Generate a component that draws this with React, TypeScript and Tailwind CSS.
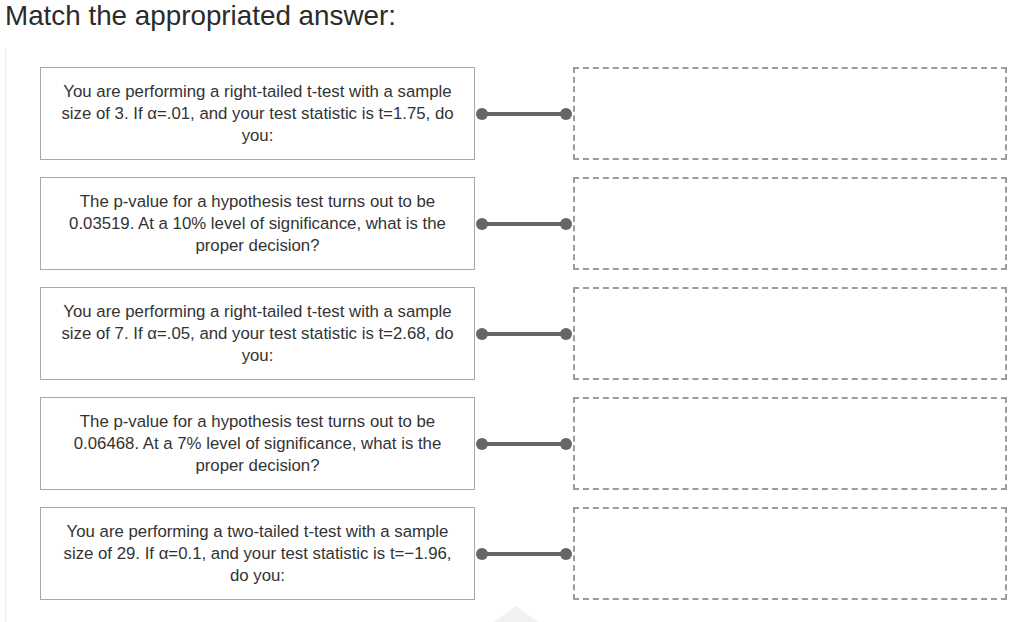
import React from "react";

const items = [
  "You are performing a right-tailed t-test with a sample size of 3. If α=.01, and your test statistic is t=1.75, do you:",
  "The p-value for a hypothesis test turns out to be 0.03519. At a 10% level of significance, what is the proper decision?",
  "You are performing a right-tailed t-test with a sample size of 7. If α=.05, and your test statistic is t=2.68, do you:",
  "The p-value for a hypothesis test turns out to be 0.06468. At a 7% level of significance, what is the proper decision?",
  "You are performing a two-tailed t-test with a sample size of 29. If α=0.1, and your test statistic is t=−1.96, do you:",
];

function Connector() {
  return (
    <svg width="98" height="14" viewBox="0 0 98 14" className="shrink-0">
      <line x1="7" y1="7" x2="91" y2="7" stroke="#666666" strokeWidth="4" />
      <circle cx="7" cy="7" r="6" fill="#666666" />
      <circle cx="91" cy="7" r="6" fill="#666666" />
    </svg>
  );
}

export default function App() {
  return (
    <div
      className="relative w-[1028px] h-[622px] overflow-hidden bg-white text-[#333333]"
      style={{ fontFamily: '"Liberation Sans", Arial, sans-serif' }}
    >
      <h1 className="pl-[5px] text-[27.8px] leading-[31px] text-[#2b2b2b] font-normal">
        Match the appropriated answer:
      </h1>
      <div className="ml-[5px] mt-[17px] border-l border-[#ececec] h-[600px] pl-[34px] pt-[19px] flex flex-col gap-[17px]">
        {items.map((t, i) => (
          <div key={i} className="flex items-center">
            <div className="w-[435px] h-[93px] shrink-0 border border-[#a8a8a8] flex items-center justify-center px-[15px] text-center text-[16.8px] leading-[22px] text-[#333333]">
              {t}
            </div>
            <Connector />
            <div className="w-[434px] h-[93px] shrink-0 border-2 border-dashed border-[#9c9c9c]" />
          </div>
        ))}
      </div>
      <svg
        className="absolute left-[488px] top-[606px]"
        width="56"
        height="20"
        viewBox="0 0 56 20"
      >
        <polygon points="28,0 56,20 0,20" fill="#f2f2f2" />
      </svg>
    </div>
  );
}
